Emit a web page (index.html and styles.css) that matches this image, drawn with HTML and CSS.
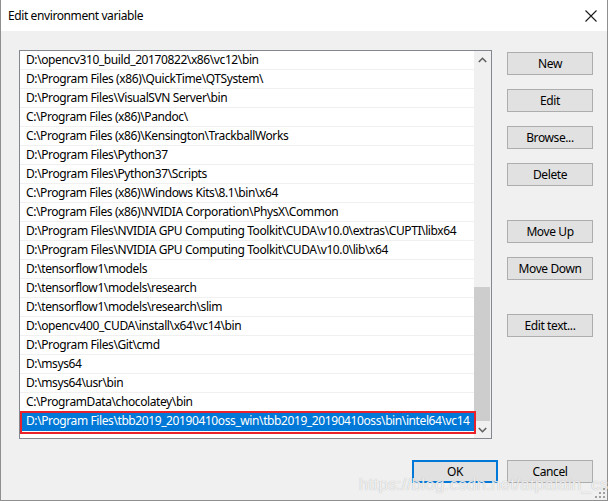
FILE: index.html
```html
<!DOCTYPE html>
<html lang="en">
<head>
    <meta charset="UTF-8">
    <title>Edit environment variable</title>
    <link rel="stylesheet" href="styles.css">
</head>
<body>
    <div class="window">
        <!-- Title Bar -->
        <div class="titlebar">
            <span class="title">Edit environment variable</span>
            <svg class="close" width="12" height="12" viewBox="0 0 12 12">
                <path d="M0.5 0.5 L11.5 11.5 M11.5 0.5 L0.5 11.5" stroke="#1a1a1a" stroke-width="1.1" fill="none"/>
            </svg>
        </div>

        <!-- Dialog Body -->
        <div class="content">
            <div class="listbox">
                <ul class="rows">
                    <li>D:\opencv310_build_20170822\x86\vc12\bin</li>
                    <li>D:\Program Files (x86)\QuickTime\QTSystem\</li>
                    <li>D:\Program Files\VisualSVN Server\bin</li>
                    <li>C:\Program Files (x86)\Pandoc\</li>
                    <li>C:\Program Files (x86)\Kensington\TrackballWorks</li>
                    <li>D:\Program Files\Python37</li>
                    <li>D:\Program Files\Python37\Scripts</li>
                    <li>C:\Program Files (x86)\Windows Kits\8.1\bin\x64</li>
                    <li>C:\Program Files (x86)\NVIDIA Corporation\PhysX\Common</li>
                    <li>D:\Program Files\NVIDIA GPU Computing Toolkit\CUDA\v10.0\extras\CUPTI\libx64</li>
                    <li>D:\Program Files\NVIDIA GPU Computing Toolkit\CUDA\v10.0\lib\x64</li>
                    <li>D:\tensorflow1\models</li>
                    <li>D:\tensorflow1\models\research</li>
                    <li>D:\tensorflow1\models\research\slim</li>
                    <li>D:\opencv400_CUDA\install\x64\vc14\bin</li>
                    <li>D:\Program Files\Git\cmd</li>
                    <li>D:\msys64</li>
                    <li>D:\msys64\usr\bin</li>
                    <li>C:\ProgramData\chocolatey\bin</li>
                    <li class="selected">D:\Program Files\tbb2019_20190410oss_win\tbb2019_20190410oss\bin\intel64\vc14</li>
                </ul>
                <div class="scrollbar">
                    <div class="arrow">
                        <svg width="9" height="6" viewBox="0 0 9 6"><path d="M0.8 5 L4.5 1.3 L8.2 5" stroke="#606060" stroke-width="1.6" fill="none"/></svg>
                    </div>
                    <div class="track"><div class="thumb"></div></div>
                    <div class="arrow">
                        <svg width="9" height="6" viewBox="0 0 9 6"><path d="M0.8 1 L4.5 4.7 L8.2 1" stroke="#606060" stroke-width="1.6" fill="none"/></svg>
                    </div>
                </div>
            </div>

            <div class="buttons">
                <button>New</button>
                <button>Edit</button>
                <button>Browse...</button>
                <button>Delete</button>
                <button class="group">Move Up</button>
                <button>Move Down</button>
                <button class="group">Edit text...</button>
            </div>

            <div class="footer">
                <button class="default">OK</button>
                <button>Cancel</button>
            </div>

            <div class="watermark">https://blog.csdn.net/atpalain_csdn</div>
            <svg class="grip" width="10" height="10" viewBox="0 0 10 10" fill="#a0a0a0">
                <rect x="8" y="0" width="2" height="2"/>
                <rect x="4" y="4" width="2" height="2"/><rect x="8" y="4" width="2" height="2"/>
                <rect x="0" y="8" width="2" height="2"/><rect x="4" y="8" width="2" height="2"/><rect x="8" y="8" width="2" height="2"/>
            </svg>
        </div>
    </div>
</body>
</html>
```

FILE: styles.css
```css
/* Base */
html, body {
    margin: 0;
    padding: 0;
    background: #fff;
}

body {
    font-family: "Segoe UI", "Noto Sans", sans-serif;
    font-size: 12px;
    letter-spacing: -0.4px;
    color: #000;
}

/* Window frame */
.window {
    width: 608px;
    height: 501px;
    box-sizing: border-box;
    border: 1px solid #8f8f8f;
    border-top: none;
    display: flex;
    flex-direction: column;
}

.titlebar {
    height: 31px;
    background: #fff;
    display: flex;
    align-items: center;
    justify-content: space-between;
    padding: 0 10px 0 7px;
    flex-shrink: 0;
}

.close {
    margin-top: 1px;
}

/* Body */
.content {
    flex: 1;
    background: #f0f0f0;
    position: relative;
    display: grid;
    grid-template-columns: 473px 86px;
    grid-template-rows: 389px auto;
    column-gap: 15px;
    padding: 19px 14px 0 18px;
}

/* List box */
.listbox {
    box-sizing: border-box;
    border: 1px solid #828790;
    background: #fff;
    display: flex;
}

.rows {
    list-style: none;
    margin: 0;
    padding: 0;
    flex: 1;
    min-width: 0;
}

.rows li {
    height: 19px;
    line-height: 18px;
    box-sizing: border-box;
    border-bottom: 1px solid #f0f0f0;
    padding-left: 6px;
    white-space: nowrap;
    overflow: hidden;
    position: relative;
}

.rows li.selected {
    background: #0078d7;
    color: #fff;
    overflow: visible;
    border-bottom: none;
}

/* red annotation box drawn on the screenshot */
.rows li.selected::after {
    content: "";
    position: absolute;
    top: -1px;
    left: 0;
    right: -2px;
    bottom: -3px;
    border: 2px solid #e8212b;
}

.scrollbar {
    width: 17px;
    background: #f0f0f0;
    display: flex;
    flex-direction: column;
}

.arrow {
    height: 17px;
    display: flex;
    align-items: center;
    justify-content: center;
}

.track {
    flex: 1;
    display: flex;
    flex-direction: column;
    justify-content: flex-end;
}

.thumb {
    height: 134px;
    margin-right: 1px;
    background: #cdcdcd;
}

/* Buttons */
.buttons {
    display: flex;
    flex-direction: column;
    gap: 14px;
    padding-top: 2px;
}

.buttons .group {
    margin-top: 20px;
}

button {
    font-family: inherit;
    font-size: 12px;
    letter-spacing: inherit;
    color: #000;
    width: 86px;
    height: 23px;
    box-sizing: border-box;
    background: #e1e1e1;
    border: 1px solid #adadad;
    padding: 0;
    margin: 0;
}

button.default {
    border: 2px solid #0078d7;
}

.footer {
    grid-column: 1 / 3;
    display: flex;
    justify-content: flex-end;
    gap: 9px;
    margin-top: 21px;
    height: 23px;
}

.watermark {
    position: absolute;
    left: 358px;
    top: 444px;
    font-family: "Liberation Sans", sans-serif;
    font-size: 17px;
    letter-spacing: 0.2px;
    color: rgba(255, 255, 255, 0.8);
    text-shadow: 0 0 1px rgba(140, 140, 140, 0.7);
    white-space: nowrap;
}

.grip {
    position: absolute;
    right: 2px;
    bottom: 2px;
}
```
